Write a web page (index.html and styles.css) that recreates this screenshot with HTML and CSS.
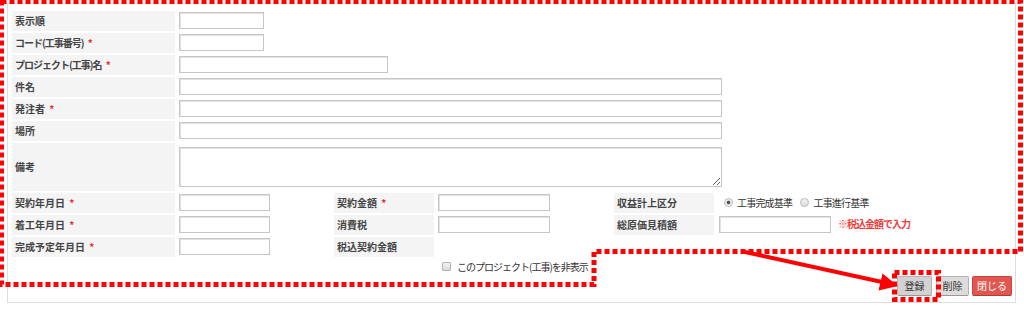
FILE: index.html
```html
<!DOCTYPE html>
<html lang="ja">
<head>
    <meta charset="UTF-8">
    <meta name="viewport" content="width=device-width, initial-scale=1.0">
    <title>プロジェクト(工事)登録</title>
    <link rel="stylesheet" href="styles.css">
</head>
<body>
    <div class="panel">
        <table class="form">
            <colgroup>
                <col class="c1"><col class="c2"><col class="c3"><col class="c4"><col class="c5"><col class="c6">
            </colgroup>
            <tr>
                <th>表示順</th>
                <td colspan="5"><input type="text" class="w-s"></td>
            </tr>
            <tr>
                <th><span class="tight">コード(工事番号)</span> <span class="req">*</span></th>
                <td colspan="5"><input type="text" class="w-s"></td>
            </tr>
            <tr>
                <th><span class="tight">プロジェクト(工事)名</span> <span class="req">*</span></th>
                <td colspan="5"><input type="text" class="w-m"></td>
            </tr>
            <tr>
                <th>件名</th>
                <td colspan="5"><input type="text" class="w-l"></td>
            </tr>
            <tr>
                <th>発注者 <span class="req">*</span></th>
                <td colspan="5"><input type="text" class="w-l"></td>
            </tr>
            <tr>
                <th>場所</th>
                <td colspan="5"><input type="text" class="w-l"></td>
            </tr>
            <tr class="tall">
                <th>備考</th>
                <td colspan="5"><textarea class="w-l"></textarea></td>
            </tr>
            <tr>
                <th>契約年月日 <span class="req">*</span></th>
                <td><input type="text" class="w-d"></td>
                <th>契約金額 <span class="req">*</span></th>
                <td><input type="text" class="w-a"></td>
                <th>収益計上区分</th>
                <td>
                    <label class="radio"><input type="radio" name="kbn" checked>工事完成基準</label>
                    <label class="radio"><input type="radio" name="kbn">工事進行基準</label>
                </td>
            </tr>
            <tr>
                <th>着工年月日 <span class="req">*</span></th>
                <td><input type="text" class="w-d"></td>
                <th>消費税</th>
                <td><input type="text" class="w-a"></td>
                <th>総原価見積額</th>
                <td><input type="text" class="w-a"><span class="note">※税込金額で入力</span></td>
            </tr>
            <tr>
                <th>完成予定年月日 <span class="req">*</span></th>
                <td><input type="text" class="w-d"></td>
                <th>税込契約金額</th>
                <td></td>
                <td></td>
                <td></td>
            </tr>
            <tr class="short">
                <td></td>
                <td></td>
                <td></td>
                <td><label class="check"><input type="checkbox"><span class="tight">このプロジェクト(工事)を非表示</span></label></td>
                <td></td>
                <td></td>
            </tr>
        </table>
        <div class="actions">
            <button class="btn">登録</button>
            <button class="btn btn-light">削除</button>
            <button class="btn btn-close">閉じる</button>
        </div>
    </div>

    <!-- annotation overlay -->
    <svg class="marks" width="1024" height="311" viewBox="0 0 1024 311">
        <path d="M1.5 1.5 H1020.5 V251.5 H594 V284.5 H1.5 Z" />
        <rect x="894.5" y="272.5" width="44" height="27" />
        <line class="arrow" x1="745" y1="252" x2="882" y2="282" />
        <polygon points="898,286 878.5,290.5 882.5,273.5" />
    </svg>
</body>
</html>
```

FILE: styles.css
```css
*{
    box-sizing: border-box;
}
body{
    margin: 0;
    background-color: white;
    font-family: "Noto Sans CJK JP", sans-serif;
    font-size: 10px;
    color: #333;
}
.panel{
    margin: 3px 0 0 7px;
    width: 1009px;
    border: 1px solid #ddd;
    padding: 4.5px 0 6.5px 2px;
}
.form{
    table-layout: fixed;
    border-collapse: separate;
    border-spacing: 2px 2.5px;
    width: 1005px;
}
.c1{ width: 163px; }
.c2{ width: 155px; }
.c3{ width: 100px; }
.c4{ width: 176px; }
.c5{ width: 100px; }
.form th,
.form td{
    height: 20px;
    padding: 0 0 0 2px;
    vertical-align: middle;
    text-align: left;
    white-space: nowrap;
}
.form th{
    background-color: #f4f4f4;
    font-weight: bold;
    color: #444;
    padding-left: 3px;
}
.form tr.tall th,
.form tr.tall td{
    height: 48px;
}
.form tr.short td{
    height: 9px;
}
.tight{
    letter-spacing: -1px;
}
.req{
    color: #e83030;
    margin-left: 2px;
}
input[type=text],
textarea{
    display: block;
    height: 17px;
    border: 1px solid #c6c6c6;
    box-shadow: inset 1px 1px 0 #e2e2e2;
    font-family: inherit;
    font-size: 10px;
    padding: 0 3px;
    margin: 0;
}
textarea{
    height: 40px;
}
.w-s{ width: 85px; }
.w-m{ width: 209px; }
.w-l{ width: 543px; }
.w-d{ width: 91px; }
.w-a{ width: 112px; }
.note{
    color: #f03a3a;
    font-weight: bold;
    letter-spacing: -1px;
    margin-left: 7px;
}
.form td:last-child input.w-a{
    display: inline-block;
    vertical-align: middle;
    margin-left: 1px;
}
.radio{
    display: inline-flex;
    align-items: center;
    margin-left: 6px;
    margin-right: 6px;
    letter-spacing: -0.8px;
}
.radio input{
    appearance: none;
    width: 9px;
    height: 9px;
    margin: 0 4px 0 0;
    border: 1px solid #b8b8b8;
    border-radius: 50%;
    background: linear-gradient(#f4f4f4, #dcdcdc);
}
.radio + .radio{
    margin-left: 0;
}
.radio input:checked{
    background: radial-gradient(circle, #555 0 1.6px, #f0f0f0 2.2px);
}
.check{
    display: inline-flex;
    align-items: center;
    margin-left: 4px;
}
.check input{
    appearance: none;
    width: 9px;
    height: 9px;
    margin: 0 6px 0 0;
    border: 1px solid #b4b4b4;
    border-radius: 1px;
    background: linear-gradient(#f2f2f2, #dadada);
}
.actions{
    display: flex;
    justify-content: flex-end;
    gap: 3px;
    padding-right: 3px;
}
.btn{
    height: 20px;
    padding: 0;
    white-space: nowrap;
    font-family: inherit;
    font-size: 10px;
    color: #333;
    background-color: #d2d2d2;
    border: 1px solid #b3b3b3;
    border-bottom-color: #999;
    border-radius: 2px;
}
.btn:first-child{
    width: 35px;
    margin-right: 1px;
}
.btn-light{
    width: 33px;
    background-color: #dcdcdc;
}
.btn-close{
    width: 40px;
    color: white;
    background-color: #e0574f;
    border-color: #cc463f;
    border-bottom-color: #b33b35;
}
.marks{
    position: absolute;
    top: 0;
    left: 0;
    pointer-events: none;
}
.marks path,
.marks rect{
    fill: none;
    stroke: #ff0000;
    stroke-width: 5;
    stroke-dasharray: 5 3;
}
.marks .arrow{
    stroke: #ff0000;
    stroke-width: 4;
}
.marks polygon{
    fill: #ff0000;
}
```
